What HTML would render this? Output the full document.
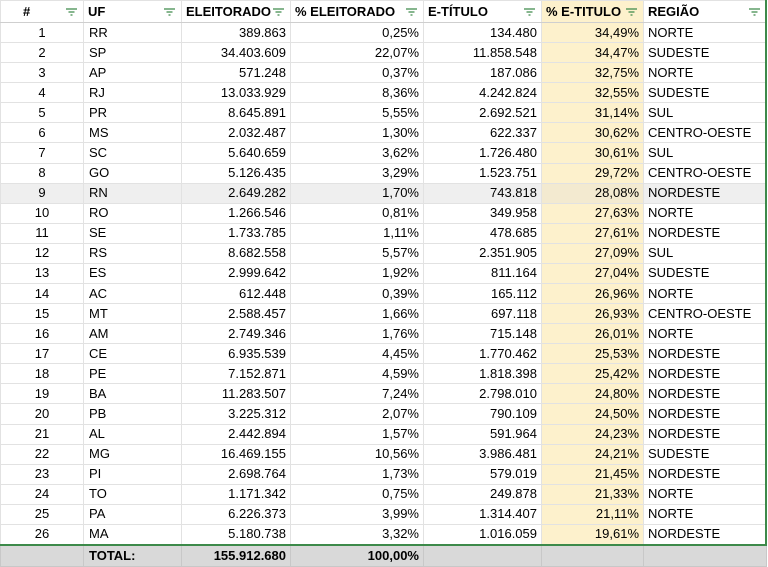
<!DOCTYPE html>
<html><head><meta charset="utf-8"><style>
*{margin:0;padding:0;box-sizing:border-box}
body{width:768px;height:566px;background:#fff;overflow:hidden;font-family:"Liberation Sans",Arial,sans-serif;font-size:13px;color:#000}
table{border-collapse:collapse;table-layout:fixed;width:766px;position:absolute;left:0;top:0}
td,th{border:1px solid #e2e2e2;height:20.08px;padding:0 4px;white-space:nowrap;overflow:hidden;line-height:18px}
th{height:22px;font-weight:bold;text-align:left;position:relative;border-bottom:1px solid #cfcfcf}
th svg{position:absolute;right:6px;top:7px}
td.c{text-align:center}
td.r{text-align:right}
td.l{padding-left:5px}
.y{background:#fdf1cc}
tr.g td{background:#efefef}
tr.g td.y{background:#f3ead0}
tr.t td{background:#d9d9d9;font-weight:bold;height:22px;border-color:#c8c8c8}
tbody tr:last-child td{border-bottom:2px solid #3d8a4a}
.gr{position:absolute;left:765px;top:0;width:2px;height:545px;background:#3d8a4a}
</style></head><body>
<table>
<colgroup><col style="width:83px"><col style="width:98px"><col style="width:109px"><col style="width:133px"><col style="width:118px"><col style="width:102px"><col style="width:123px"></colgroup>
<thead><tr>
<th style="padding-left:22px">#<svg width="11" height="8"><path d="M0 1h11M2.5 4h6M4.5 7h2" stroke="#3d8a4a" stroke-width="1.3"/></svg></th>
<th>UF<svg width="11" height="8"><path d="M0 1h11M2.5 4h6M4.5 7h2" stroke="#3d8a4a" stroke-width="1.3"/></svg></th>
<th>ELEITORADO<svg width="11" height="8"><path d="M0 1h11M2.5 4h6M4.5 7h2" stroke="#3d8a4a" stroke-width="1.3"/></svg></th>
<th>% ELEITORADO<svg width="11" height="8"><path d="M0 1h11M2.5 4h6M4.5 7h2" stroke="#3d8a4a" stroke-width="1.3"/></svg></th>
<th>E-TÍTULO<svg width="11" height="8"><path d="M0 1h11M2.5 4h6M4.5 7h2" stroke="#3d8a4a" stroke-width="1.3"/></svg></th>
<th class="y">% E-TITULO<svg width="11" height="8"><path d="M0 1h11M2.5 4h6M4.5 7h2" stroke="#3d8a4a" stroke-width="1.3"/></svg></th>
<th>REGIÃO<svg width="11" height="8"><path d="M0 1h11M2.5 4h6M4.5 7h2" stroke="#3d8a4a" stroke-width="1.3"/></svg></th>
</tr></thead>
<tbody>
<tr><td class="c">1</td><td class="l">RR</td><td class="r">389.863</td><td class="r">0,25%</td><td class="r">134.480</td><td class="r y">34,49%</td><td>NORTE</td></tr>
<tr><td class="c">2</td><td class="l">SP</td><td class="r">34.403.609</td><td class="r">22,07%</td><td class="r">11.858.548</td><td class="r y">34,47%</td><td>SUDESTE</td></tr>
<tr><td class="c">3</td><td class="l">AP</td><td class="r">571.248</td><td class="r">0,37%</td><td class="r">187.086</td><td class="r y">32,75%</td><td>NORTE</td></tr>
<tr><td class="c">4</td><td class="l">RJ</td><td class="r">13.033.929</td><td class="r">8,36%</td><td class="r">4.242.824</td><td class="r y">32,55%</td><td>SUDESTE</td></tr>
<tr><td class="c">5</td><td class="l">PR</td><td class="r">8.645.891</td><td class="r">5,55%</td><td class="r">2.692.521</td><td class="r y">31,14%</td><td>SUL</td></tr>
<tr><td class="c">6</td><td class="l">MS</td><td class="r">2.032.487</td><td class="r">1,30%</td><td class="r">622.337</td><td class="r y">30,62%</td><td>CENTRO-OESTE</td></tr>
<tr><td class="c">7</td><td class="l">SC</td><td class="r">5.640.659</td><td class="r">3,62%</td><td class="r">1.726.480</td><td class="r y">30,61%</td><td>SUL</td></tr>
<tr><td class="c">8</td><td class="l">GO</td><td class="r">5.126.435</td><td class="r">3,29%</td><td class="r">1.523.751</td><td class="r y">29,72%</td><td>CENTRO-OESTE</td></tr>
<tr class="g"><td class="c">9</td><td class="l">RN</td><td class="r">2.649.282</td><td class="r">1,70%</td><td class="r">743.818</td><td class="r y">28,08%</td><td>NORDESTE</td></tr>
<tr><td class="c">10</td><td class="l">RO</td><td class="r">1.266.546</td><td class="r">0,81%</td><td class="r">349.958</td><td class="r y">27,63%</td><td>NORTE</td></tr>
<tr><td class="c">11</td><td class="l">SE</td><td class="r">1.733.785</td><td class="r">1,11%</td><td class="r">478.685</td><td class="r y">27,61%</td><td>NORDESTE</td></tr>
<tr><td class="c">12</td><td class="l">RS</td><td class="r">8.682.558</td><td class="r">5,57%</td><td class="r">2.351.905</td><td class="r y">27,09%</td><td>SUL</td></tr>
<tr><td class="c">13</td><td class="l">ES</td><td class="r">2.999.642</td><td class="r">1,92%</td><td class="r">811.164</td><td class="r y">27,04%</td><td>SUDESTE</td></tr>
<tr><td class="c">14</td><td class="l">AC</td><td class="r">612.448</td><td class="r">0,39%</td><td class="r">165.112</td><td class="r y">26,96%</td><td>NORTE</td></tr>
<tr><td class="c">15</td><td class="l">MT</td><td class="r">2.588.457</td><td class="r">1,66%</td><td class="r">697.118</td><td class="r y">26,93%</td><td>CENTRO-OESTE</td></tr>
<tr><td class="c">16</td><td class="l">AM</td><td class="r">2.749.346</td><td class="r">1,76%</td><td class="r">715.148</td><td class="r y">26,01%</td><td>NORTE</td></tr>
<tr><td class="c">17</td><td class="l">CE</td><td class="r">6.935.539</td><td class="r">4,45%</td><td class="r">1.770.462</td><td class="r y">25,53%</td><td>NORDESTE</td></tr>
<tr><td class="c">18</td><td class="l">PE</td><td class="r">7.152.871</td><td class="r">4,59%</td><td class="r">1.818.398</td><td class="r y">25,42%</td><td>NORDESTE</td></tr>
<tr><td class="c">19</td><td class="l">BA</td><td class="r">11.283.507</td><td class="r">7,24%</td><td class="r">2.798.010</td><td class="r y">24,80%</td><td>NORDESTE</td></tr>
<tr><td class="c">20</td><td class="l">PB</td><td class="r">3.225.312</td><td class="r">2,07%</td><td class="r">790.109</td><td class="r y">24,50%</td><td>NORDESTE</td></tr>
<tr><td class="c">21</td><td class="l">AL</td><td class="r">2.442.894</td><td class="r">1,57%</td><td class="r">591.964</td><td class="r y">24,23%</td><td>NORDESTE</td></tr>
<tr><td class="c">22</td><td class="l">MG</td><td class="r">16.469.155</td><td class="r">10,56%</td><td class="r">3.986.481</td><td class="r y">24,21%</td><td>SUDESTE</td></tr>
<tr><td class="c">23</td><td class="l">PI</td><td class="r">2.698.764</td><td class="r">1,73%</td><td class="r">579.019</td><td class="r y">21,45%</td><td>NORDESTE</td></tr>
<tr><td class="c">24</td><td class="l">TO</td><td class="r">1.171.342</td><td class="r">0,75%</td><td class="r">249.878</td><td class="r y">21,33%</td><td>NORTE</td></tr>
<tr><td class="c">25</td><td class="l">PA</td><td class="r">6.226.373</td><td class="r">3,99%</td><td class="r">1.314.407</td><td class="r y">21,11%</td><td>NORTE</td></tr>
<tr><td class="c">26</td><td class="l">MA</td><td class="r">5.180.738</td><td class="r">3,32%</td><td class="r">1.016.059</td><td class="r y">19,61%</td><td>NORDESTE</td></tr>
</tbody>
<tfoot><tr class="t"><td></td><td class="l">TOTAL:</td><td class="r">155.912.680</td><td class="r">100,00%</td><td></td><td></td><td></td></tr></tfoot>
</table>
<div class="gr"></div>
</body></html>
